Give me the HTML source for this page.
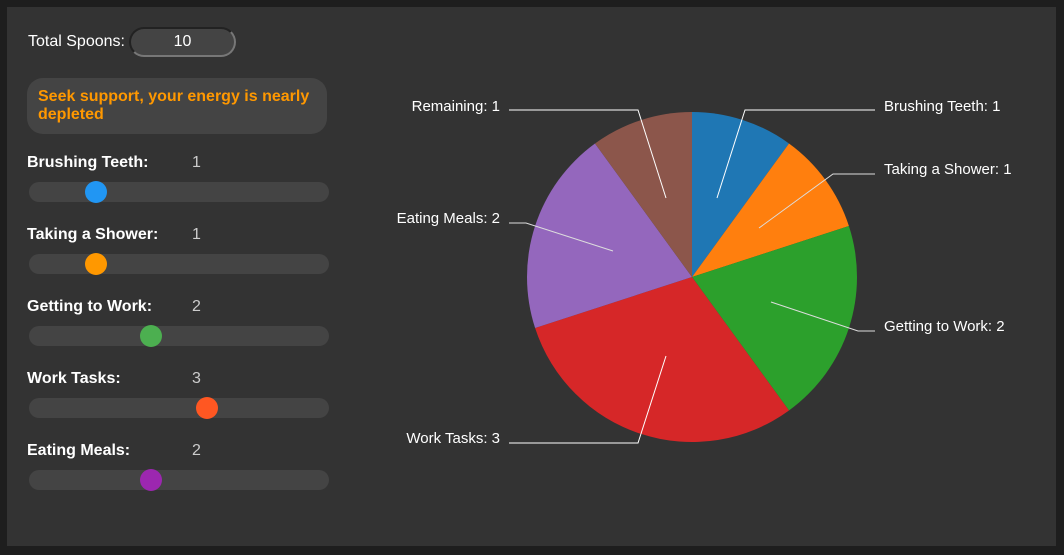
<!DOCTYPE html>
<html><head><style>
body{margin:0;background:#1e1e1e;width:1064px;height:555px;overflow:hidden;font-family:"Liberation Sans",Arial,sans-serif;}
.panel{position:absolute;left:7px;top:7px;width:1049px;height:539px;background:#333;}
.a{position:absolute;}
.lbl{position:absolute;left:27px;color:#fff;font-weight:bold;font-size:16px;}
.val{position:absolute;left:192px;color:#ccc;font-size:16px;}
.track{position:absolute;left:29px;width:300px;height:20px;border-radius:10px;background:#444;}
.th{position:absolute;width:22px;height:22px;border-radius:50%;}
</style></head><body>
<div class="panel"></div>
<div class="a" style="left:28px;top:33px;color:#fff;font-size:16px;">Total Spoons:</div>
<div class="a" style="left:129px;top:27px;width:107px;height:30px;border-radius:15px;background:#444;border:2px solid #777;border-top-color:#222;border-left-color:#222;box-sizing:border-box;color:#fff;font-size:16px;text-align:center;line-height:26px;">10</div>
<div class="a" style="left:27px;top:78px;width:300px;height:56px;border-radius:16px;background:#444;"></div>
<div class="a" style="left:38px;top:88px;width:285px;color:#ff9800;font-weight:bold;font-size:16px;line-height:18px;">Seek support, your energy is nearly depleted</div>

<div class="lbl" style="top:154px">Brushing Teeth:</div><div class="val" style="top:154px">1</div>
<div class="track" style="top:182px"></div><div class="th" style="left:85px;top:181px;background:#2196f3"></div>
<div class="lbl" style="top:226px">Taking a Shower:</div><div class="val" style="top:226px">1</div>
<div class="track" style="top:254px"></div><div class="th" style="left:85px;top:253px;background:#ff9800"></div>
<div class="lbl" style="top:298px">Getting to Work:</div><div class="val" style="top:298px">2</div>
<div class="track" style="top:326px"></div><div class="th" style="left:140px;top:325px;background:#4caf50"></div>
<div class="lbl" style="top:370px">Work Tasks:</div><div class="val" style="top:370px">3</div>
<div class="track" style="top:398px"></div><div class="th" style="left:196px;top:397px;background:#ff5722"></div>
<div class="lbl" style="top:442px">Eating Meals:</div><div class="val" style="top:442px">2</div>
<div class="track" style="top:470px"></div><div class="th" style="left:140px;top:469px;background:#9c27b0"></div>

<svg class="a" style="left:0;top:0" width="1064" height="555">
<g transform="translate(692,277)">
<path d="M0,0L0,-165A165,165 0 0 1 97,-133.5Z" fill="#1f77b4"/>
<path d="M0,0L97,-133.5A165,165 0 0 1 156.9,-51Z" fill="#ff7f0e"/>
<path d="M0,0L156.9,-51A165,165 0 0 1 97,133.5Z" fill="#2ca02c"/>
<path d="M0,0L97,133.5A165,165 0 0 1 -156.9,51Z" fill="#d62728"/>
<path d="M0,0L-156.9,51A165,165 0 0 1 -97,-133.5Z" fill="#9467bd"/>
<path d="M0,0L-97,-133.5A165,165 0 0 1 0,-165Z" fill="#8c564b"/>
</g>
<g stroke="#fff" stroke-width="1" fill="none">
<polyline points="717,198 745,110 875,110"/>
<polyline points="759,228 833,174 875,174" stroke="#ddd"/>
<polyline points="771,302 858,331 875,331" stroke="#ddd"/>
<polyline points="666,356 638,443 509,443"/>
<polyline points="613,251 526,223 509,223" stroke="#ddd"/>
<polyline points="666,198 638,110 509,110"/>
</g>
<g fill="#fff" font-size="15" font-family="Liberation Sans, Arial, sans-serif">
<text x="884" y="111">Brushing Teeth: 1</text>
<text x="884" y="174">Taking a Shower: 1</text>
<text x="884" y="331">Getting to Work: 2</text>
<text x="500" y="443" text-anchor="end">Work Tasks: 3</text>
<text x="500" y="223" text-anchor="end">Eating Meals: 2</text>
<text x="500" y="111" text-anchor="end">Remaining: 1</text>
</g>
</svg>
</body></html>
